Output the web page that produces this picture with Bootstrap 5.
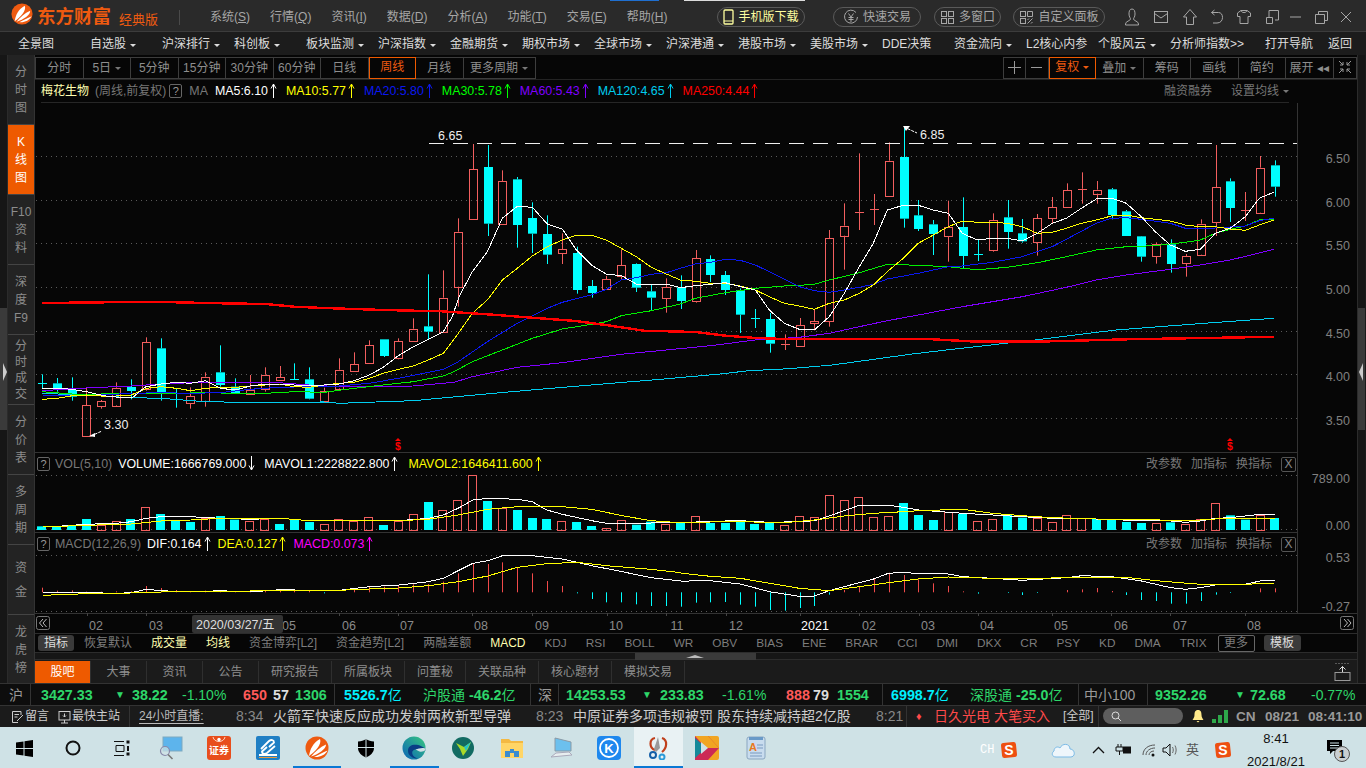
<!DOCTYPE html>
<html lang="zh-CN">
<head>
  <meta charset="UTF-8">
  <title>东方财富 经典版</title>
  <link rel="stylesheet" href="https://cdn.jsdelivr.net/npm/bootstrap@5.3.0/dist/css/bootstrap.min.css">
  <script src="https://cdn.jsdelivr.net/npm/bootstrap@5.3.0/dist/js/bootstrap.bundle.min.js"></script>
  <style>
    html, body { width: 1366px; height: 768px; overflow: hidden; margin: 0; }
    body { background: #1b1b1b; color: #aaa; font: 12px/1.2 "Liberation Sans", "Noto Sans CJK SC", sans-serif; }
    svg text { font-family: "Liberation Sans", "Noto Sans CJK SC", sans-serif; }

    /* title bar */
    .title-bar { height: 32px; background: #2a2a2a; border-bottom: 1px solid #3c3c3c; position: relative; padding-top: 3px; }
    .top-strip { position: absolute; left: 610px; top: 0; width: 195px; height: 1px; background: linear-gradient(90deg, #1f6fd0 25%, transparent 25%, transparent 38%, #dcdcdc 38%); }
    .logo-mark { margin: 0 4px 6px 11px; flex: none; }
    .logo-text { color: #ee5a10; font-size: 18.5px; font-weight: 700; }
    .logo-sub { color: #ee5a10; font-size: 13px; margin-top: 5px; }
    .menu-sep { width: 1px; height: 15px; background: #4a4a4a; margin: 0 30px 0 21px; }
    .menu-item { color: #a6a6a6; gap: 20px; }
    .pill-btn { height: 20px; padding: 0; font-size: 12px; line-height: 18px; color: #a6a6a6; border: 1px solid #5a5a5a; display: inline-flex; align-items: center; justify-content: center; gap: 4px; flex: none; }
    .pill-phone { color: #ffffa0; width: 88px; }
    .pill-trade { width: 88px; margin-left: 28px; }
    .pill-multi { width: 67px; margin-left: 13px; }
    .pill-custom { width: 92px; margin-left: 12px; }
    .win-icons { display: grid; grid-template-columns: 28px 29px 29px 25px 30px 26px 20px 32px 18px; justify-items: center; align-items: center; margin: 0 11px 0 13px; color: #a6a6a6; }

    /* market nav */
    .market-nav { height: 23px; background: #1c1c1c; padding-left: 18px; padding-top: 2px; color: #ddd; }
    .market-nav > span { width: 72px; flex: none; }
    .market-nav .caret-dn { margin-left: 4px; }
    .caret-dn { display: inline-block; border-left: 3px solid transparent; border-right: 3px solid transparent; border-top: 3px solid currentColor; vertical-align: middle; }
    .market-nav .nav-open { width: 63px; margin-left: 23px; }

    /* main */
    .main-wrap { height: 628px; }
    .edge-strip { width: 8px; flex: none; background: linear-gradient(#161616 253px, #3a3a3a 253px, #3a3a3a 375px, #161616 375px); position: relative; border-right: 1px solid #2b2b2b; }
    .edge-strip.end { border-right: 0; border-left: 1px solid #2b2b2b; }
    .edge-grip { position: absolute; top: 308px; left: 3px; width: 0; height: 0; border-top: 9px solid transparent; border-bottom: 9px solid transparent; border-left: 4px solid #ccc; }
    .edge-strip.end .edge-grip { left: 1px; border-left: 0; border-right: 4px solid #ccc; }
    .side-rail { width: 27px; flex: none; background: #232323; overflow: hidden; border-right: 1px solid #333; height: 628px; }
    .rail-tab { height: 70px; flex: none; color: #8c8c8c; line-height: 18px; text-align: center; border-bottom: 1px solid #444; padding-top: 8px; font-size: 12px; }
    .rail-tab.tight { line-height: 16px; padding-top: 3px; }
    .rail-tab.wide { line-height: 24px; padding-top: 11px; }
    .rail-on { background: #ee5a00; color: #fff; }
    .chart-col { width: 1322px; flex: none; background: #060606; }

    .tool-row { height: 25px; padding-top: 2px; border-bottom: 1px solid #232323; }
    .kbtns { height: 22px; border: 1px solid #3d3d3d; }
    .kbtns span { width: 47.5px; line-height: 20px; text-align: center; color: #8e8e8e; border-right: 1px solid #3d3d3d; }
    .kbtns span:last-child { border-right: 0; }
    .kbtns .k-on { border: 1px solid #ee5a00; color: #ee5a10; line-height: 18px; margin: -1px 0; height: 22px; }
    .kbtns .k-long { width: 71px; }
    .kbtns .k-thin { width: 22.5px; }
    .kbtns .k-thin svg { vertical-align: -2px; }
    .kbtns .k-caret { color: #777; margin-left: 4px; }
    .kbtns .k-on .k-caret { color: #ee5a10; }

    .price-head { height: 23px; margin-left: 6px; margin-right: 68px; border-bottom: 1px solid #262626; background: #060606; }
    .stock-name { color: #ffffb0; }
    .dim { color: #777; }
    .dim-en { font-size: 12.4px; }
    .help-box { width: 13px; height: 14px; border: 1px solid #666; border-radius: 2px; color: #999; text-align: center; line-height: 12px; font-size: 11px; flex: none; }
    .ma-item { font-size: 12.4px; margin-right: 9px; white-space: nowrap; }
    .ma-item svg { width: 7px; height: 15px; vertical-align: -3px; margin-left: 2px; }
    .c-w { color: #fff; } .c-y { color: #ff0; } .c-b { color: #0b18f0; } .c-g { color: #0f0; }
    .c-p { color: #8000ff; } .c-c { color: #00ccee; } .c-r { color: #f00; } .c-m { color: #f0f; }
    .pane-links { gap: 9px; color: #777; }
    .x-box { width: 15px; height: 15px; border: 1px solid #555; border-radius: 2px; text-align: center; line-height: 13px; color: #888; }
    .sub-head { width: 1263px; padding-left: 2px; padding-right: 1px; border-right: 1px solid #333; }
    .vol-head { height: 23px; }
    .macd-head { height: 22px; padding-top: 1px; }
    .pane-sep { border-top: 1px solid #333; }
    .pane-svg { display: block; overflow: visible; }

    .index-row { height: 20px; border-top: 1px solid #2c2c2c; border-bottom: 1px solid #2c2c2c; padding-left: 3px; gap: 19px; color: #7d7d7d; white-space: nowrap; }
    .idx-en { font-size: 11.8px; }
    .idx-on { background: #3a3a3a; color: #ddd; border-radius: 3px; padding: 0 6px; line-height: 16px; margin-right: -9px; }
    .idx-hot { color: #ffffb0; }
    .idx-box { border: 1px solid #666; border-radius: 2px; padding: 0 5.5px; line-height: 15px; margin-left: -8px; }
    .idx-tpl { background: #3a3a3a; color: #ddd; border-radius: 3px; padding: 0 6.5px; line-height: 16px; margin-left: -10px; }
    .h-scroll { height: 7px; background: #161616; border-bottom: 1px solid #2c2c2c; padding-left: 600px; }
    .h-thumb { width: 121px; height: 7px; background: #3a3a3a; position: relative; }
    .h-thumb::after { content: ""; position: absolute; left: 51px; top: 2px; border-left: 9px solid transparent; border-right: 9px solid transparent; border-bottom: 3px solid #bbb; }

    .info-tabs { height: 23px; background: #1b1b1b; }
    .info-tabs .nav-link { padding: 0 12px; min-width: 56px; text-align: center; color: #8e8e8e; font-size: 12px; line-height: 22px; border-right: 1px solid #2f2f2f; border-radius: 0; }
    .info-tabs .nav-link.active { background: #ee5a00; color: #fff; }

    /* quote and news rows */
    .quote-row { height: 22px; background: #0d0d0d; border-top: 1px solid #333; font-size: 14.3px; line-height: 22px; padding-left: 9px; display: grid; white-space: nowrap; font-weight: 700;
      grid-template-columns: 32px 77px 14px 50px 61px 30px 22px 49px 79px 115px 28px 79px 15px 62px 64px 27px 24px 54px 79px 114px 71px 83px 12px 61px 55px;
      background-image: linear-gradient(#333,#333), linear-gradient(#333,#333), linear-gradient(#333,#333), linear-gradient(#333,#333), linear-gradient(#333,#333), linear-gradient(#333,#333), linear-gradient(#333,#333);
      background-size: 1px 100%; background-repeat: no-repeat;
      background-position: 30px 0, 334px 0, 530px 0, 558px 0, 882px 0, 1078px 0, 1147px 0; }
    .q-g { color: #2ed66a; } .q-r { color: #ff5a5a; } .q-w { color: #ddd; } .q-c { color: #00f0ff; }
    .q-n { font-weight: 400; font-size: 14px; }
    .q-d { font-weight: 400; color: #999; font-size: 14px; }
    .q-tri { font-size: 10px; margin-left: -3px; font-weight: 400; }
    .news-row { height: 22px; background: #1b1b1b; border-top: 1px solid #333; font-size: 14px; line-height: 21px; padding-left: 11px; display: grid; white-space: nowrap; color: #ccc;
      grid-template-columns: 47px 81px 97px 37px 263px 37px 303px 40px 18px 129px 40px 88px 21px 24px 29px 43px 58px;
      background-image: linear-gradient(#333,#333), linear-gradient(#333,#333), linear-gradient(#333,#333);
      background-size: 1px 100%; background-repeat: no-repeat; background-position: 129px 0, 906px 0, 1098px 0; }
    .news-row svg { vertical-align: -2px; }
    .n-small { font-size: 12px; }
    .n-time { color: #888; }
    .n-live { color: #bbb; font-size: 12px; text-decoration: underline; text-underline-offset: 3px; overflow: hidden; }
    .n-red { color: #ff4a4a; }
    .n-dot { color: #ff4a4a; font-size: 11px; }
    .n-search { width: 80px; height: 16px; margin-top: 2px; background: #5e5e5e; border-radius: 8px; padding-left: 8px; line-height: 14px; }
    .n-st { color: #999; font-weight: 700; font-size: 13.6px; }

    /* taskbar */
    .task-bar { height: 41px; background: #cfe2e6; color: #222; }
    .task-cell { width: 48.75px; height: 41px; flex: none; display: flex; align-items: center; justify-content: center; padding-top: 1px; }
    .task-run { border-bottom: 2px solid #0a78d4; padding-top: 2px; }
    .task-now { background: #e9f2f4; }
    .tray { margin-left: 200px; display: grid; grid-template-columns: 20px 51px 41px 22px 28px 20px 24px 28px 33px 78px 40px; align-items: center; height: 41px; }
    .tray-ch { color: #fff; font-family: "Liberation Mono", monospace; font-size: 12px; }
    .tray-lang { color: #555; font-size: 13px; }
    .tray-clock { width: 58px; text-align: center; font-size: 13px; line-height: 23px; color: #111; white-space: nowrap; }
  </style>
</head>
<body>
  <svg width="0" height="0" class="position-absolute">
    <symbol id="arUp" viewBox="0 0 7 15"><path d="M3.5 15V1M1 5.5L3.5 1L6 5.5" fill="none" stroke="currentColor"/></symbol>
    <symbol id="arDn" viewBox="0 0 7 15"><path d="M3.5 0V14M1 9.5L3.5 14L6 9.5" fill="none" stroke="currentColor"/></symbol>
    <symbol id="emLogo" viewBox="0 0 24 24">
      <circle cx="12" cy="12" r="11.5" fill="#ee5a10"/>
      <path d="M4 20C5 13 8 7 15 3C17 8 11 15 4 20Z" fill="#fff"/>
      <path d="M6 20.500C10 16 15 11 21 8.500C21 13 14 18 6 20.500Z" fill="#fff"/>
      <path d="M9 21C13 19 18 16.500 22.500 14.500C20 19 15 21.500 9 21Z" fill="#fff"/>
    </symbol>
  </svg>

  <!-- title bar -->
  <div class="title-bar d-flex align-items-center">
    <div class="top-strip"></div>
    <svg width="22" height="22" class="logo-mark"><use href="#emLogo"/></svg>
    <span class="logo-text">东方财富</span>
    <span class="logo-sub ms-2">经典版</span>
    <span class="menu-sep"></span>
    <div class="d-flex menu-item">
      <span>系统(<u>S</u>)</span><span>行情(<u>Q</u>)</span><span>资讯(<u>I</u>)</span><span>数据(<u>D</u>)</span><span>分析(<u>A</u>)</span><span>功能(<u>T</u>)</span><span>交易(<u>E</u>)</span><span>帮助(<u>H</u>)</span>
    </div>
    <div class="d-flex align-items-center ms-auto">
      <span class="pill-btn rounded-pill pill-phone">
        <svg width="11" height="16" viewBox="0 0 11 16"><rect x="1" y="1" width="9" height="14" rx="1" fill="none" stroke="currentColor" stroke-width="1.300"/><path d="M1 12H10" stroke="currentColor"/></svg>手机版下载</span>
      <span class="pill-btn rounded-pill pill-trade">
        <svg width="16" height="16" viewBox="0 0 16 16" fill="none" stroke="currentColor"><path d="M13 3.500A6.500 6.500 0 1 0 14.500 8"/><path d="M5.500 4.500L8 8L10.500 4.500M5.500 8.500H10.500M5.500 10.500H10.500M8 8V13"/></svg>快速交易</span>
      <span class="pill-btn rounded-pill pill-multi">
        <svg width="15" height="15" viewBox="0 0 15 15" fill="none" stroke="currentColor"><rect x="1.500" y="1.500" width="5" height="5"/><rect x="8.500" y="1.500" width="5" height="5"/><rect x="1.500" y="8.500" width="5" height="5"/><rect x="8.500" y="8.500" width="5" height="5"/></svg>多窗口</span>
      <span class="pill-btn rounded-pill pill-custom">
        <svg width="15" height="15" viewBox="0 0 15 15" fill="none" stroke="currentColor"><rect x="1.500" y="1.500" width="5" height="5"/><rect x="1.500" y="8.500" width="5" height="5"/><path d="M8.500 1.500H13.500V6.500H8.500ZM8.500 13.500L13.500 8.500M8.500 10L10 8.500M12 13.500L13.500 12"/></svg>自定义面板</span>
      <div class="win-icons">
        <svg width="16" height="20" viewBox="0 0 16 20" fill="none" stroke="currentColor"><path d="M8 2C5.500 2 5 4.500 5 7C5 10 6.500 11 6.500 12C6.500 14 1.500 14 1.500 17V18H14.500V17C14.500 14 9.500 14 9.500 12C9.500 11 11 10 11 7C11 4.500 10.500 2 8 2Z"/></svg>
        <svg width="16" height="16" viewBox="0 0 16 16" fill="none" stroke="currentColor"><rect x="1.500" y="2.500" width="13" height="11"/><path d="M1.500 4.500L8 9L14.500 4.500"/></svg>
        <svg width="16" height="18" viewBox="0 0 16 18" fill="none" stroke="currentColor"><path d="M8 1.500L14.500 9H11.500V16.500H4.500V9H1.500Z"/></svg>
        <svg width="14" height="16" viewBox="0 0 14 16" fill="none" stroke="currentColor"><path d="M1.500 3.500H8.500C11 3.500 12.500 5.500 12.500 8.500C12.500 11.500 10.500 14 7 14H3M1.500 3.500L4.500 1M1.500 3.500L4.500 6"/></svg>
        <svg width="16" height="16" viewBox="0 0 16 16" fill="none" stroke="currentColor"><path d="M5 1.500H11L14.500 4V7.500H12V14.500H4V7.500H1.500V4ZM5 1.500C5.500 3 6.500 3.500 8 3.500C9.500 3.500 10.500 3 11 1.500"/></svg>
        <svg width="15" height="16" viewBox="0 0 15 16" fill="none" stroke="currentColor"><path d="M1.500 8.500H7.500V14.500H1.500ZM4 8.500V1.500H13.500V11H10"/></svg>
        <svg width="11" height="2" viewBox="0 0 11 2"><path d="M0 1H11" stroke="currentColor"/></svg>
        <svg width="13" height="13" viewBox="0 0 13 13" fill="none" stroke="currentColor"><path d="M.5 3.500H9.500V12.500H.5ZM3.500 3.500V.5H12.500V9.500H9.500"/></svg>
        <svg width="12" height="12" viewBox="0 0 12 12"><path d="M1 1L11 11M11 1L1 11" stroke="currentColor"/></svg>
      </div>
    </div>
  </div>

  <!-- market nav -->
  <div class="market-nav d-flex align-items-center text-nowrap">
    <span>全景图</span>
    <span>自选股<i class="caret-dn"></i></span>
    <span>沪深排行<i class="caret-dn"></i></span>
    <span>科创板<i class="caret-dn"></i></span>
    <span>板块监测<i class="caret-dn"></i></span>
    <span>沪深指数<i class="caret-dn"></i></span>
    <span>金融期货<i class="caret-dn"></i></span>
    <span>期权市场<i class="caret-dn"></i></span>
    <span>全球市场<i class="caret-dn"></i></span>
    <span>沪深港通<i class="caret-dn"></i></span>
    <span>港股市场<i class="caret-dn"></i></span>
    <span>美股市场<i class="caret-dn"></i></span>
    <span>DDE决策</span>
    <span>资金流向<i class="caret-dn"></i></span>
    <span>L2核心内参</span>
    <span>个股风云<i class="caret-dn"></i></span>
    <span>分析师指数&gt;&gt;</span>
    <span class="nav-open">打开导航</span>
    <span>返回</span>
  </div>

  <!-- main area -->
  <div class="main-wrap d-flex">
    <div class="edge-strip"><div class="edge-grip"></div></div>
    <div class="side-rail d-flex flex-column">
      <div class="rail-tab">分<br>时<br>图</div>
      <div class="rail-tab rail-on">K<br>线<br>图</div>
      <div class="rail-tab">F10<br>资<br>料</div>
      <div class="rail-tab">深<br>度<br>F9</div>
      <div class="rail-tab tight">分<br>时<br>成<br>交</div>
      <div class="rail-tab">分<br>价<br>表</div>
      <div class="rail-tab">多<br>周<br>期</div>
      <div class="rail-tab wide">资<br>金</div>
      <div class="rail-tab">龙<br>虎<br>榜</div>
    </div>
    <div class="chart-col">
      <div class="tool-row d-flex justify-content-between">
        <div class="kbtns d-flex">
          <span>分时</span><span>5日<i class="caret-dn k-caret"></i></span><span>5分钟</span><span>15分钟</span><span>30分钟</span><span>60分钟</span><span>日线</span><span class="k-on">周线</span><span>月线</span><span class="k-long">更多周期<i class="caret-dn k-caret"></i></span>
        </div>
        <div class="kbtns d-flex">
          <span class="k-thin"><svg width="13" height="13" viewBox="0 0 13 13"><path d="M6.500 0V13M0 6.500H13" stroke="#999"/></svg></span>
          <span class="k-thin"><svg width="11" height="13" viewBox="0 0 11 13"><path d="M0 6.500H11" stroke="#999"/></svg></span>
          <span class="k-on">复权<i class="caret-dn k-caret"></i></span><span>叠加<i class="caret-dn k-caret"></i></span><span>筹码</span><span>画线</span><span>简约</span><span>展开 ◂◂</span>
          <span class="k-thin"><svg width="14" height="14" viewBox="0 0 14 14" fill="none" stroke="#999"><path d="M1 1L5 5M5 2V5H2M13 1L9 5M9 2V5H12M1 13L5 9M5 12V9H2M13 13L9 9M9 12V9H12"/></svg></span>
        </div>
      </div>

      <!-- price pane -->
      <div class="price-head d-flex align-items-center text-nowrap">
        <span class="stock-name">梅花生物</span>
        <span class="dim" style="margin-left:6px">(周线,前复权)</span>
        <span class="help-box" style="margin-left:3px">?</span>
        <span class="dim dim-en" style="margin:0 7px">MA</span>
        <span class="ma-item c-w">MA5:6.10<svg><use href="#arUp"/></svg></span>
        <span class="ma-item c-y">MA10:5.77<svg><use href="#arUp"/></svg></span>
        <span class="ma-item c-b">MA20:5.80<svg><use href="#arUp"/></svg></span>
        <span class="ma-item c-g">MA30:5.78<svg><use href="#arUp"/></svg></span>
        <span class="ma-item c-p">MA60:5.43<svg><use href="#arUp"/></svg></span>
        <span class="ma-item c-c">MA120:4.65<svg><use href="#arUp"/></svg></span>
        <span class="ma-item c-r">MA250:4.44<svg><use href="#arUp"/></svg></span>
        <span class="dim ms-auto">融资融券</span>
        <span class="dim" style="margin-left:19px">设置均线<i class="caret-dn" style="margin-left:4px"></i></span>
      </div>
      <div id="pricePane"></div>

      <!-- volume pane -->
      <div class="vol-head sub-head pane-sep d-flex align-items-center text-nowrap">
        <span class="help-box">?</span>
        <span class="dim dim-en" style="margin:0 6px 0 5px">VOL(5,10)</span>
        <span class="ma-item c-w">VOLUME:1666769.000<svg><use href="#arDn"/></svg></span>
        <span class="ma-item c-w" style="margin-right:10px">MAVOL1:2228822.800<svg><use href="#arUp"/></svg></span>
        <span class="ma-item c-y">MAVOL2:1646411.600<svg><use href="#arUp"/></svg></span>
        <div class="d-flex align-items-center ms-auto pane-links"><span>改参数</span><span>加指标</span><span>换指标</span><span class="x-box">X</span></div>
      </div>
      <div id="volPane"></div>

      <!-- macd pane -->
      <div class="macd-head sub-head pane-sep d-flex align-items-center text-nowrap">
        <span class="help-box">?</span>
        <span class="dim dim-en" style="margin:0 6px 0 5px">MACD(12,26,9)</span>
        <span class="ma-item c-w" style="margin-right:7px">DIF:0.164<svg><use href="#arUp"/></svg></span>
        <span class="ma-item c-y" style="margin-right:7px">DEA:0.127<svg><use href="#arUp"/></svg></span>
        <span class="ma-item c-m">MACD:0.073<svg><use href="#arUp"/></svg></span>
        <div class="d-flex align-items-center ms-auto pane-links"><span>改参数</span><span>加指标</span><span>换指标</span><span class="x-box">X</span></div>
      </div>
      <div id="macdPane"></div>
      <div id="timeAxis"></div>

      <!-- indicators -->
      <div class="index-row d-flex align-items-center">
        <span class="idx-on">指标</span><span>恢复默认</span><span class="idx-hot">成交量</span><span class="idx-hot">均线</span><span>资金博弈[L2]</span><span>资金趋势[L2]</span><span>两融差额</span><span class="idx-hot">MACD</span><span class="idx-en">KDJ</span><span class="idx-en">RSI</span><span class="idx-en">BOLL</span><span class="idx-en">WR</span><span class="idx-en">OBV</span><span class="idx-en">BIAS</span><span class="idx-en">ENE</span><span class="idx-en">BRAR</span><span class="idx-en">CCI</span><span class="idx-en">DMI</span><span class="idx-en">DKX</span><span class="idx-en">CR</span><span class="idx-en">PSY</span><span class="idx-en">KD</span><span class="idx-en">DMA</span><span class="idx-en">TRIX</span><span class="idx-box">更多</span><span class="idx-tpl">模板</span>
      </div>
      <div class="h-scroll"><div class="h-thumb"></div></div>

      <div class="info-tabs d-flex align-items-center justify-content-between">
        <ul class="nav">
          <li class="nav-item"><a class="nav-link active" href="#">股吧</a></li>
          <li class="nav-item"><a class="nav-link" href="#">大事</a></li>
          <li class="nav-item"><a class="nav-link" href="#">资讯</a></li>
          <li class="nav-item"><a class="nav-link" href="#">公告</a></li>
          <li class="nav-item"><a class="nav-link" href="#">研究报告</a></li>
          <li class="nav-item"><a class="nav-link" href="#">所属板块</a></li>
          <li class="nav-item"><a class="nav-link" href="#">问董秘</a></li>
          <li class="nav-item"><a class="nav-link" href="#">关联品种</a></li>
          <li class="nav-item"><a class="nav-link" href="#">核心题材</a></li>
          <li class="nav-item"><a class="nav-link" href="#">模拟交易</a></li>
        </ul>
        <svg width="17" height="18" viewBox="0 0 17 18" fill="none" stroke="#999" style="margin-right:6px"><path d="M1.500 .5H15.500" stroke-dasharray="1 2"/><path d="M8.500 10V3.500M5.500 6.500L8.500 3.500L11.500 6.500" stroke="#ddd"/><rect x="1" y="9.500" width="15" height="8"/></svg>
      </div>
    </div>
    <div class="edge-strip end"><div class="edge-grip"></div></div>
  </div>

  <!-- index quotes -->
  <div class="quote-row">
    <span class="q-d">沪</span><span class="q-g">3427.33</span><span class="q-g q-tri">▼</span><span class="q-g">38.22</span><span class="q-g q-n">-1.10%</span><span class="q-r">650</span><span class="q-w">57</span><span class="q-g">1306</span><span class="q-c">5526.7<span class="q-n">亿</span></span><span class="q-g"><span class="q-n">沪股通</span> -46.2<span class="q-n">亿</span></span>
    <span class="q-d">深</span><span class="q-g">14253.53</span><span class="q-g q-tri">▼</span><span class="q-g">233.83</span><span class="q-g q-n">-1.61%</span><span class="q-r">888</span><span class="q-w">79</span><span class="q-g">1554</span><span class="q-c">6998.7<span class="q-n">亿</span></span><span class="q-g"><span class="q-n">深股通</span> -25.0<span class="q-n">亿</span></span>
    <span class="q-d">中小100</span><span class="q-g">9352.26</span><span class="q-g q-tri">▼</span><span class="q-g">72.68</span><span class="q-g q-n">-0.77%</span>
  </div>

  <!-- news ticker -->
  <div class="news-row">
    <span class="d-flex align-items-center n-small" style="gap:1px"><svg width="13" height="14" viewBox="0 0 13 14" fill="none" stroke="#ccc"><path d="M10 5V1.500H1.500V12.500H7M3.500 4.500H8M3.500 7H6.500M6 11L12 5"/></svg>留言</span>
    <span class="d-flex align-items-center n-small" style="gap:1px"><svg width="13" height="14" viewBox="0 0 13 14" fill="none" stroke="#ccc"><rect x="1" y="1.500" width="11" height="8.500"/><path d="M3 13H10M6.500 10V13M6.500 3.500V7M5 5.500L6.500 7L8 5.500"/></svg>最快主站</span>
    <span class="n-live">24小时直播:</span>
    <span class="n-time">8:34</span><span>火箭军快速反应成功发射两枚新型导弹</span>
    <span class="n-time">8:23</span><span>中原证券多项违规被罚 股东持续减持超2亿股</span>
    <span class="n-time">8:21</span>
    <span class="n-dot">♦</span>
    <span class="n-red">日久光电 大笔买入</span>
    <span class="n-small">[全部]</span>
    <span class="n-search"><svg width="11" height="11" viewBox="0 0 11 11" fill="none" stroke="#ddd"><circle cx="4.500" cy="4.500" r="3.500"/><path d="M7 7L10 10"/></svg></span>
    <span><svg width="14" height="14" viewBox="0 0 14 14"><path d="M7 1C4 1 3.500 3.500 3.500 6C3.500 8.500 2 10 1.500 11H12.500C12 10 10.500 8.500 10.500 6C10.500 3.500 10 1 7 1ZM5.500 12H8.500L7 13.500Z" fill="#ffe98a"/></svg></span>
    <span><svg width="16" height="14" viewBox="0 0 16 14" fill="#2ea84a"><rect x="0" y="10" width="4" height="4"/><rect x="6" y="6" width="4" height="8"/><rect x="12" y="1" width="4" height="13"/></svg></span>
    <span class="n-st">CN</span><span class="n-st">08/21</span><span class="n-st">08:41:10</span>
  </div>

  <!-- windows taskbar -->
  <div class="task-bar d-flex">
    <div class="task-cell"><svg width="17" height="17" viewBox="0 0 17 17" fill="#000"><path d="M0 2.500L7.500 1.500V8H0ZM8.500 1.300L17 0V8H8.500ZM0 9H7.500V15.500L0 14.500ZM8.500 9H17V17L8.500 15.700Z"/></svg></div>
    <div class="task-cell"><svg width="16" height="16" viewBox="0 0 16 16"><circle cx="8" cy="8" r="6.500" fill="none" stroke="#111" stroke-width="2"/></svg></div>
    <div class="task-cell"><svg width="17" height="17" viewBox="0 0 17 17" fill="none" stroke="#111"><path d="M1 1.500H11M3 5.500H11V11.500H3ZM1 15.500H11"/><rect x="14" y="1" width="2" height="2" fill="#111"/><rect x="14" y="6" width="2" height="5" fill="#111" stroke="none"/><rect x="14" y="13" width="2" height="2" fill="#111"/></svg></div>
    <div class="task-cell"><svg width="24" height="24" viewBox="0 0 24 24"><rect x="4" y="1" width="19" height="14" fill="#5db4ec" stroke="#7fa9bf"/><circle cx="6" cy="15" r="4.500" fill="#cfe2e6" fill-opacity=".7" stroke="#88a" stroke-width="1.200"/><path d="M9 18.500L13.500 23" stroke="#777" stroke-width="1.600"/></svg></div>
    <div class="task-cell"><svg width="24" height="24" viewBox="0 0 24 24"><rect width="24" height="24" rx="3" fill="#e84e1c"/><path d="M6 1C7 7 17 7 18 1" fill="none" stroke="#ffd5c4"/><circle cx="12" cy="3.500" r="1.700" fill="#fff"/><text x="12" y="18" font-size="10" font-weight="700" fill="#fff" text-anchor="middle">证券</text></svg></div>
    <div class="task-cell"><svg width="24" height="24" viewBox="0 0 24 24"><rect width="24" height="24" rx="2" fill="#1f7fc4"/><path d="M5 13L13 5C15 3.500 18 3.500 18 6.500L13 11M19 10L11 17C9 18 6 18.500 6 15.500L11 11" fill="none" stroke="#fff" stroke-width="1.800"/><rect x="3" y="18" width="18" height="2" fill="#fff"/><rect x="3" y="21" width="18" height="1" fill="#e99a3a"/></svg></div>
    <div class="task-cell task-run"><svg width="24" height="24"><use href="#emLogo"/></svg></div>
    <div class="task-cell"><svg width="18" height="20" viewBox="0 0 18 20"><path d="M1 3.500C4 3.500 7 2.500 9 1C11 2.500 14 3.500 17 3.500V10C17 14.500 13 18 9 19.500C5 18 1 14.500 1 10Z" fill="#000"/><path d="M9 1V19.500M1 9.500H17" stroke="#cfe2e6"/></svg></div>
    <div class="task-cell task-run"><svg width="24" height="24" viewBox="0 0 24 24"><defs><linearGradient id="edgeA" x1="0" y1="1" x2="1" y2="0"><stop offset="0" stop-color="#0b63b8"/><stop offset="1" stop-color="#37c77f"/></linearGradient></defs><circle cx="12" cy="12" r="11.500" fill="url(#edgeA)"/><path d="M24 14C20 8 6 6 6 15C6 20 12 23 16 22.500C10 21 8 15 13 13.500C15.500 13 17 15 20 15.500Z" fill="#0a3d85"/><path d="M24 13C23 15.500 20 16 17.500 15.500C16 15 15 14 13.500 13.500C17 12 22 11 24 13Z" fill="#cfe2e6"/></svg></div>
    <div class="task-cell"><svg width="22" height="22" viewBox="0 0 22 22"><circle cx="11" cy="11" r="11" fill="#126b62"/><path d="M4 6L12 10L19 5L16 12L11 19L8 12Z" fill="#a8d928"/><path d="M12 10L19 5L14 14Z" fill="#25c6c6"/></svg></div>
    <div class="task-cell"><svg width="22" height="20" viewBox="0 0 22 20"><path d="M0 1H8L10 3H22V20H0Z" fill="#f4b942"/><path d="M0 5H22V20H0Z" fill="#ffd566"/><path d="M4 19V13H9V11H13V13H18V19H13V15H9V19Z" fill="#3a8cd0"/></svg></div>
    <div class="task-cell"><svg width="24" height="24" viewBox="0 0 24 24"><path d="M6 2L22 6V15L6 15Z" fill="#6cc0ee" stroke="#8a9aa6"/><path d="M7 17L20 16L23 19L2 21Z" fill="#e8eef0" stroke="#aab"/></svg></div>
    <div class="task-cell"><svg width="24" height="24" viewBox="0 0 24 24"><rect width="24" height="24" rx="4" fill="#1e88ee"/><circle cx="12" cy="12" r="9" fill="none" stroke="#fff" stroke-width="1.800"/><text x="12" y="16.500" font-size="13" font-weight="700" fill="#fff" text-anchor="middle">K</text></svg></div>
    <div class="task-cell task-run task-now"><svg width="20" height="24" viewBox="0 0 20 24"><path d="M7 2C1 3 1 12 7 14M14 2C20 4 19 12 14 16" fill="none" stroke="#c0401c" stroke-width="2.200"/><path d="M10 1L12 12L8 16L6 13Z" fill="#999"/><circle cx="5" cy="19" r="3" fill="none" stroke="#1560a8" stroke-width="2"/><circle cx="14" cy="21" r="2.500" fill="none" stroke="#2b9ad8" stroke-width="2"/></svg></div>
    <div class="task-cell"><svg width="24" height="24" viewBox="0 0 24 24"><rect width="24" height="24" rx="2" fill="#f1a522"/><path d="M0 0H13L24 12L13 24H0Z" fill="#cc2a55"/><path d="M0 0H13L24 12H11Z" fill="#f1a522"/><path d="M0 2L11 12L0 22Z" fill="#14899a"/><path d="M6 6L13 12L6 18Z" fill="#cfe2e6"/></svg></div>
    <div class="task-cell"><svg width="20" height="24" viewBox="0 0 20 24"><rect x="1" y="1" width="18" height="22" rx="2" fill="#c8dcee" stroke="#8aa6c0"/><rect x="3" y="1" width="14" height="3" fill="#6a9ac8"/><text x="7" y="15" font-size="11" font-weight="700" fill="#e87a20" text-anchor="middle">A</text><path d="M11 9H17M11 12H17M4 17H16M4 20H16" stroke="#7a9ac0"/></svg></div>
    <div class="tray">
      <span class="tray-ch">CH</span>
      <svg width="18" height="18" viewBox="0 0 18 18"><rect x="1.500" y="1.500" width="15" height="15" rx="2.500" fill="#ee4f10" transform="rotate(-6 9 9)"/><text x="9" y="14" font-size="14" font-weight="700" fill="#fff" text-anchor="middle">S</text></svg>
      <svg width="24" height="16" viewBox="0 0 24 16"><path d="M5 15C1 15 0 11 3 9C3 5 7 4 9 6C11 1 19 1 19 7C22 7 24 10 23 13C22 15 20 15 19 15Z" fill="#eef6fb" stroke="#7cbbe6"/></svg>
      <svg width="13" height="8" viewBox="0 0 13 8"><path d="M1 7L6.500 1.500L12 7" fill="none" stroke="#111" stroke-width="1.300"/></svg>
      <svg width="17" height="14" viewBox="0 0 17 14"><path d="M4 1V4M7 1V4M2 4H9V8H2ZM5.500 8V12" fill="none" stroke="#111"/><rect x="9" y="3.500" width="8" height="7" fill="#111"/></svg>
      <svg width="14" height="13" viewBox="0 0 14 13" fill="none" stroke="#555"><path d="M1 11C1 5 6 1 13 1M4 11C4 7 8 4 13 4M7 11C7 9 9 7 12 7"/><circle cx="11" cy="11" r="1.500" fill="#111" stroke="none"/></svg>
      <svg width="16" height="14" viewBox="0 0 16 14" fill="none" stroke="#111"><path d="M1 5H4L8 1V13L4 9H1Z"/><path d="M10.500 4C11.500 6 11.500 8 10.500 10M13 2.500C14.500 5.500 14.500 8.500 13 11.500" stroke="#666"/></svg>
      <span class="tray-lang">英</span>
      <svg width="18" height="18" viewBox="0 0 18 18"><rect x="1.500" y="1.500" width="15" height="15" rx="2.500" fill="#ee4f10" transform="rotate(-6 9 9)"/><text x="9" y="14" font-size="14" font-weight="700" fill="#fff" text-anchor="middle">S</text></svg>
      <div class="tray-clock">8:41<br>2021/8/21</div>
      <svg width="28" height="26" viewBox="0 0 28 26"><path d="M2 3H17V14H8L5 17V14H2Z" fill="#000"/><path d="M5 6H14M5 8.500H14M5 11H14" stroke="#cfe2e6"/><circle cx="17" cy="17" r="7.500" fill="#c9ced0" stroke="#555"/><text x="17" y="21" font-size="11" fill="#111" text-anchor="middle" font-weight="700">1</text></svg>
    </div>
  </div>

  <script>
    const colW = 14.857;
    const barX = i => 43.3 + colW * i;
    const crisp = v => Math.round(v) + 0.5;
    const UP = '#f25e5e', DOWN = '#00ffff';

    // candles in crop pixels: [red?, high, body top, body bottom, low]
    const candles = [
      [0,733,759,759,775],[0,744,760,778,785],[0,742,780,800,812],[1,772,826,918,920],[1,810,814,830,836],[1,757,773,826,828],
      [0,748,771,783,808],[1,622,637,778,782],[0,625,655,790,812],[0,775,790,790,833],[1,772,799,820,836],[1,727,740,812,830],
      [0,646,727,765,770],[0,745,770,792,792],[1,735,780,792,792],[1,712,734,777,785],[1,708,742,752,752],[0,700,748,748,750],
      [0,712,748,806,808],[1,773,784,815,815],[1,685,719,775,783],[1,667,703,724,724],[1,631,646,700,700],[0,628,628,678,681],
      [1,625,634,686,688],[1,565,596,631,631],[0,433,589,605,630],[1,421,503,605,607],[1,265,305,470,530],[1,42,118,268,268],
      [0,45,111,281,318],[1,121,154,284,284],[0,141,148,285,353],[0,217,264,311,369],[0,256,312,374,402],[1,310,358,371,402],
      [0,350,369,480,491],[0,450,468,489,503],[1,438,448,479,479],[1,358,406,440,447],[0,400,402,473,486],[0,463,484,503,541],
      [1,445,472,506,548],[0,436,472,513,537],[1,360,385,515,518],[0,376,387,435,456],[0,423,435,480,495],[0,475,481,554,609],
      [0,537,565,565,594],[0,549,567,641,668],[1,613,641,641,660],[1,564,586,650,650],[1,538,574,581,601],[1,300,325,575,590],
      [1,220,287,317,419],[1,70,245,245,300],[1,192,237,237,285],[1,37,92,197,197],[0,-10,81,266,293],[0,210,256,297,303],
      [0,270,283,312,375],[1,212,292,320,395],[0,202,291,378,414],[0,330,373,373,393],[1,250,271,362,365],[0,210,262,306,356],
      [0,267,310,334,338],[1,252,265,338,377],[1,201,232,266,282],[1,160,181,233,233],[1,127,176,176,221],[1,153,179,191,221],
      [0,174,178,255,268],[0,240,244,318,318],[0,318,319,380,395],[1,337,343,380,401],[0,328,343,402,428],[1,372,379,401,440],
      [1,268,281,374,377],[1,45,172,278,318],[0,145,154,234,276],[1,186,240,240,273],[1,78,113,247,248],[0,91,106,170,200]
    ];

    // moving averages, read off three crops (x offset 0, 440, 880)
    const lineFrom = (a, b, c) => [
      ...a.filter(p => p[0] / 3 < 444.5).map(p => [p[0] / 3, 130 + p[1] / 3]),
      ...b.filter(p => p[0] / 3 > 0 && 440 + p[0] / 3 > 444.5 && 440 + p[0] / 3 < 889.5).map(p => [440 + p[0] / 3, 130 + p[1] / 3]),
      ...c.filter(p => 880 + p[0] / 3 > 889.5).map(p => [880 + p[0] / 3, 130 + p[1] / 3])
    ];
    const maLines = [
      ['#00ccee', 1, lineFrom(
        [[130,790],[307,798],[397,803],[487,805],[619,815],[731,817],[976,816],[1021,820],[1130,816],[1243,812],[1320,805]],
        [[130,793],[300,778],[480,763],[640,750],[835,733],[930,722],[1050,716],[1180,705],[1350,680]],
        [[100,672],[220,658],[450,632],[710,600],[1000,578],[1186,565]])],
      ['#8000ff', 1, lineFrom(
        [[130,782],[240,775],[307,772],[397,768],[487,762],[575,758],[709,757],[841,758],[931,765],[1021,770],[1111,770],[1243,768],[1330,760]],
        [[45,757],[100,740],[235,712],[370,698],[547,673],[682,660],[814,647],[949,630],[1081,622],[1171,610],[1261,590],[1345,572]],
        [[118,555],[250,530],[430,500],[562,472],[652,450],[742,435],[874,418],[964,405],[1054,390],[1186,358]])],
      ['#00ee00', 1, lineFrom(
        [[130,785],[220,792],[307,792],[397,790],[532,790],[619,788],[709,790],[799,790],[886,785],[976,787],[1066,775],[1153,765],[1243,755],[1333,738]],
        [[45,725],[100,695],[190,660],[280,625],[370,597],[457,583],[502,575],[547,557],[637,542],[724,522],[769,505],[859,488],[949,475],[1036,468],[1081,466],[1126,463],[1171,450],[1261,428],[1345,403]],
        [[118,406],[208,410],[250,415],[295,419],[385,412],[475,398],[562,380],[652,360],[742,350],[829,347],[919,337],[964,330],[1009,310],[1054,298],[1099,288],[1141,270],[1186,268]])],
      ['#0b18f0', 1, lineFrom(
        [[130,795],[220,798],[307,795],[397,790],[487,788],[575,790],[664,788],[754,778],[841,772],[931,770],[1021,768],[1111,760],[1198,745],[1288,727],[1333,718]],
        [[58,695],[145,635],[235,580],[325,535],[370,517],[457,495],[502,478],[547,450],[592,443],[637,433],[682,428],[724,415],[769,402],[814,397],[859,388],[904,391],[949,405],[991,425],[1036,448],[1081,470],[1126,482],[1171,487],[1216,480],[1261,472],[1303,463],[1345,447]],
        [[118,430],[208,410],[250,408],[340,397],[430,380],[520,350],[562,328],[652,280],[697,265],[742,263],[787,268],[874,280],[919,295],[964,297],[1009,294],[1099,288],[1141,272],[1186,264]])],
      ['#ffff00', 1, lineFrom(
        [[130,808],[175,805],[220,797],[262,795],[307,798],[352,798],[397,795],[442,775],[487,770],[532,775],[575,782],[619,775],[664,772],[709,772],[754,768],[799,765],[841,762],[886,770],[931,772],[976,765],[1021,760],[1066,757],[1111,745],[1153,730],[1198,718],[1243,708],[1288,690],[1333,670]],
        [[58,610],[100,550],[145,510],[190,450],[235,415],[280,378],[325,350],[370,330],[412,316],[457,315],[502,330],[547,355],[592,380],[637,412],[682,432],[724,450],[769,454],[814,460],[859,460],[904,468],[949,480],[991,500],[1036,520],[1081,528],[1126,538],[1171,520],[1216,510],[1261,490],[1303,465],[1345,425]],
        [[73,385],[118,340],[208,290],[250,273],[295,277],[340,277],[385,280],[430,290],[475,310],[520,307],[562,295],[607,280],[652,270],[697,258],[742,255],[787,263],[829,268],[874,273],[919,285],[964,290],[1009,290],[1054,297],[1099,301],[1141,285],[1186,270]])],
      ['#ffffff', 1, lineFrom(
        [[130,775],[175,775],[220,778],[262,785],[290,792],[330,800],[400,803],[440,770],[487,762],[532,757],[575,760],[619,752],[664,775],[709,780],[754,768],[799,762],[841,762],[886,765],[931,768],[976,765],[1021,762],[1066,752],[1111,735],[1153,712],[1198,677],[1243,650],[1288,628],[1333,605]],
        [[40,560],[60,500],[100,425],[145,365],[190,265],[235,229],[280,232],[325,282],[370,297],[412,360],[457,405],[502,432],[547,437],[592,462],[637,465],[682,462],[724,473],[769,467],[814,463],[859,458],[904,470],[949,480],[991,540],[1036,580],[1081,598],[1126,600],[1171,560],[1216,490],[1261,410],[1303,340],[1345,240]],
        [[73,226],[118,226],[163,240],[208,250],[250,310],[295,330],[340,325],[385,325],[430,333],[475,310],[520,280],[562,265],[607,235],[652,207],[697,204],[742,220],[787,260],[829,305],[874,345],[919,364],[964,358],[1009,310],[1054,295],[1099,260],[1141,205],[1186,186]])],
      ['#ff0000', 2.400, lineFrom(
        [[130,519],[400,516],[530,517],[665,520],[800,522],[885,530],[975,534],[1065,537],[1155,540],[1245,542],[1330,544]],
        [[145,553],[280,563],[410,573],[500,585],[615,602],[770,606],[860,617],[950,624],[1010,626],[1350,627]],
        [[160,628],[295,635],[520,634],[745,628],[1100,622],[1186,620]])]
    ];

    const poly = (pts, color, w) => `<polyline points="${pts.map(p => p[0].toFixed(1) + ',' + p[1].toFixed(1)).join(' ')}" fill="none" stroke="${color}" stroke-width="${w}" shape-rendering="crispEdges"/>`;
    const dots = y => `<path d="M37 ${crisp(y)}H1301" stroke="#5a5a5a" stroke-dasharray="1 4"/>`;
    const axisTxt = (y, t) => `<text x="1351" y="${y + 4.500}" text-anchor="end" font-size="12.500" fill="#808080">${t}</text>`;
    const axisLine = (a, b) => `<path d="M1298.500 ${a}V${b}" stroke="#333"/>`;
    const pane = (id, y, h, body) => {
      document.getElementById(id).innerHTML = `<svg class="pane-svg" width="1322" height="${h}" viewBox="36 ${y} 1322 ${h}">${body}</svg>`;
    };

    // price pane
    let s = axisLine(103, 452);
    [[156, '6.50'], [200, '6.00'], [243, '5.50'], [287, '5.00'], [331, '4.50'], [374, '4.00'], [418, '3.50']].forEach(g => {
      s += dots(g[0]) + axisTxt(g[0] + 2, g[1]);
    });
    candles.forEach((c, i) => {
      const x = crisp(barX(i) - 0.5), col = c[0] ? UP : DOWN;
      const hi = 130 + c[1] / 3, top = 130 + c[2] / 3, bot = 130 + c[3] / 3, lo = 130 + c[4] / 3;
      s += `<path d="M${x} ${hi}V${top}M${x} ${bot}V${lo}" stroke="${col}"/>`;
      if (bot - top < 1) s += `<path d="M${x - 4.500} ${crisp(top)}H${x + 4.500}" stroke="${col}"/>`;
      else if (c[0]) s += `<rect x="${x - 4}" y="${crisp(top)}" width="8" height="${Math.round(bot - top)}" fill="none" stroke="${col}"/>`;
      else s += `<rect x="${x - 4.500}" y="${top}" width="9" height="${bot - top}" fill="${col}"/>`;
    });
    maLines.forEach(m => { s += poly(m[2], m[0], m[1]); });
    s += `<path d="M430 143.500H1298" stroke="#eee" stroke-dasharray="15 9"/>`;
    s += `<text x="439" y="140" font-size="12.500" fill="#eee">6.65</text>`;
    s += `<text x="921" y="139" font-size="12.500" fill="#eee">6.85</text>`;
    s += `<path d="M905 127L918 133" stroke="#fff" stroke-dasharray="3 1"/><path d="M904 126L911 126L907 131Z" fill="#fff"/>`;
    s += `<text x="105" y="429" font-size="12.500" fill="#eee">3.30</text>`;
    s += `<path d="M92 436L103 431" stroke="#fff" stroke-dasharray="3 1"/><path d="M90 436L96 433L96 437Z" fill="#fff"/>`;
    [399, 1231].forEach(x => {
      s += `<path d="M${x - 3} 441L${x} 438L${x + 3} 441Z" fill="#f00"/><text x="${x}" y="449.500" font-size="10.500" font-weight="700" fill="#f00" text-anchor="middle">$</text>`;
    });
    pane('pricePane', 103, 349, s);

    // lower panes use crops at 2.296x wide and 3x tall from y 450
    const sx = 2.296;
    const subLine = (a, b) => [...a.map(p => [p[0] / sx, 450 + p[1] / 3]), ...b.map(p => [683 + p[0] / sx, 450 + p[1] / 3])];

    // volume pane (negative = red bar)
    const vols = [229,231,227,207,-226,-214,207,-172,192,212,216,-205,198,209,-214,-207,222,209,216,-221,-208,-212,-202,225,-214,-193,156,-181,-151,-76,153,-174,180,204,207,-214,216,228,-234,-211,224,215,-221,219,
      -199,219,219,212,222,219,-226,-199,-202,-136,-151,-142,-202,-199,159,195,210,-187,192,-214,-208,192,203,-203,-217,-196,-204,207,209,216,219,-220,217,-223,-208,-160,196,209,-194,204];
    s = axisLine(475, 532) + dots(475) + dots(529) + axisTxt(478, '789.00') + axisTxt(525, '0.00');
    vols.forEach((v, i) => {
      const x = Math.round(barX(i) - 5), top = 450 + Math.abs(v) / 3, h = 530 - top;
      s += v < 0
        ? `<rect x="${x + 0.500}" y="${crisp(top)}" width="8" height="${Math.round(h)}" fill="none" stroke="${UP}"/>`
        : `<rect x="${x}" y="${top}" width="9" height="${h}" fill="${DOWN}"/>`;
    });
    s += poly(subLine(
      [[100,229],[134,229],[201,223],[269,220],[304,215],[338,205],[372,200],[440,200],[508,205],[577,208],[645,205],[713,212],[782,212],[850,212],[918,212],[986,205],[1020,195],[1054,175],[1088,150],[1122,145],[1190,148],[1224,155],[1258,180],[1293,193],[1361,212],[1395,220],[1463,220],[1531,218],[1565,218]],
      [[0,218],[65,214],[134,212],[201,217],[269,215],[304,212],[338,198],[372,182],[407,166],[474,166],[508,172],[543,180],[645,190],[713,195],[781,200],[850,205],[950,207],[1055,212],[1122,213],[1156,217],[1190,213],[1225,205],[1259,203],[1293,198],[1327,193],[1361,193]]), '#fff', 1);
    s += poly(subLine(
      [[100,231],[201,226],[304,222],[372,213],[440,210],[508,205],[645,205],[713,212],[850,212],[918,212],[986,208],[1054,195],[1122,178],[1190,170],[1293,170],[1361,178],[1431,197],[1497,212],[1565,218]],
      [[0,217],[134,215],[235,218],[304,210],[372,198],[440,190],[508,185],[543,182],[645,178],[713,190],[781,197],[850,203],[950,207],[1055,208],[1156,213],[1225,207],[1361,205]]), '#ff0', 1);
    pane('volPane', 475, 57, s);

    // macd pane
    const macd = [413,422,421,425,425,424,424,408,414,420,426,422,422,425,426,420,420,420,421,430,427,417,408,410,407,403,402,395,370,342,342,337,352,370,393,408,430,447,457,457,463,468,468,470,
      458,457,456,464,470,480,482,474,468,434,420,410,385,368,375,388,400,408,424,431,427,429,435,429,427,420,418,414,423,435,450,453,461,461,453,434,429,427,415,415];
    s = axisLine(554, 613) + dots(555) + dots(610.500) + axisTxt(557, '0.53') + axisTxt(606, '-0.27');
    macd.forEach((v, i) => {
      if (v === 427) return;
      const x = crisp(barX(i) - 0.5);
      s += `<path d="M${x} 592.300V${450 + v / 3}" stroke="${v < 427 ? '#f24a4a' : DOWN}"/>`;
    });
    s += poly(subLine(
      [[100,427],[168,427],[270,430],[304,428],[338,418],[372,422],[440,426],[508,422],[577,426],[645,419],[713,421],[782,421],[850,410],[918,405],[986,395],[1020,385],[1054,362],[1088,340],[1122,332],[1156,317],[1224,317],[1293,327],[1361,347],[1431,365],[1497,383],[1565,393]],
      [[0,395],[31,391],[65,392],[134,402],[201,425],[269,439],[304,438],[338,422],[372,410],[407,398],[440,387],[474,370],[508,367],[543,371],[611,372],[645,380],[713,385],[781,391],[816,388],[884,383],[918,377],[986,380],[1055,393],[1122,413],[1156,418],[1190,413],[1225,405],[1293,403],[1327,393],[1361,390]]), '#fff', 1);
    s += poly(subLine(
      [[100,436],[201,431],[304,429],[372,426],[508,424],[645,422],[782,421],[850,417],[918,414],[986,407],[1054,395],[1122,378],[1190,352],[1258,341],[1327,337],[1395,347],[1497,358],[1565,368]],
      [[0,370],[65,379],[134,385],[201,400],[269,415],[338,422],[407,410],[474,398],[543,387],[611,381],[713,385],[816,385],[918,382],[1020,382],[1088,392],[1190,403],[1293,403],[1361,399]]), '#ff0', 1);
    pane('macdPane', 554, 59, s);

    // time axis
    const ticks = [88,147,340,399,473,533,608,667,727,801,860,920,979,1053,1112,1171,1246];
    const months = [[97,'02'],[157,'03'],[290,'05'],[350,'06'],[408,'07'],[482,'08'],[543,'09'],[617,'10'],[678,'11'],[737,'12'],[816,'2021'],[870,'02'],[929,'03'],[988,'04'],[1062,'05'],[1122,'06'],[1181,'07'],[1255,'08']];
    s = `<path d="M36 613.500H1358" stroke="#333"/>`;
    ticks.forEach(x => { s += `<path d="M${x}.5 613V616" stroke="#444"/>`; });
    months.forEach(m => {
      s += `<text x="${m[0]}" y="630" font-size="12.500" text-anchor="middle" fill="${m[1] === '2021' ? '#fff' : '#8a8a8a'}">${m[1]}</text>`;
    });
    s += `<rect x="193" y="615" width="91" height="18" rx="2" fill="#333"/><text x="197" y="629" font-size="12.500" fill="#ddd">2020/03/27/五</text>`;
    s += `<rect x="37.500" y="616.500" width="13" height="13" rx="2" fill="none" stroke="#777"/><path d="M44 619L40.500 623L44 627M47.500 619L44 623L47.500 627" fill="none" stroke="#bbb"/>`;
    s += `<rect x="1341.500" y="616.500" width="13" height="13" rx="2" fill="none" stroke="#777"/><path d="M1345 619L1348.500 623L1345 627M1348.500 619L1352 623L1348.500 627" fill="none" stroke="#bbb"/>`;
    pane('timeAxis', 613, 20, s);
  </script>
</body>
</html>
